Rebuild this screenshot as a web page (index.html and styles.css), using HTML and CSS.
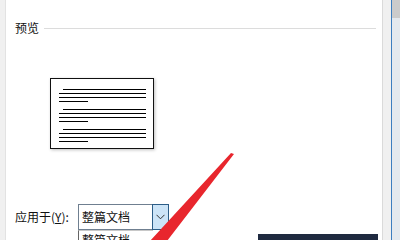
FILE: index.html
```html
<!DOCTYPE html>
<html>
  <head>
    <title>页面设置</title>
    <meta charset="utf-8" />
    <link rel="stylesheet" href="styles.css">
  </head>
  <body>
    <div class="window">
      <div class="edge-left"></div>
      <div class="main">
        <div class="group">
          <span class="group-title">预览</span>
          <span class="group-line"></span>
        </div>
        <!-- 预览缩略图：三段文字 -->
        <div class="preview">
          <div class="para">
            <i class="ln first"></i><i class="ln"></i><i class="ln"></i><i class="ln short"></i>
          </div>
          <div class="para">
            <i class="ln first"></i><i class="ln"></i><i class="ln"></i><i class="ln short"></i>
          </div>
          <div class="para">
            <i class="ln first"></i><i class="ln"></i><i class="ln"></i><i class="ln short"></i>
          </div>
        </div>
        <div class="apply">
          <span class="apply-label">应用于(<u>Y</u>):</span>
          <div class="combo">
            <span class="combo-text">整篇文档</span>
            <span class="combo-btn">
              <svg width="9" height="6" viewBox="0 0 9 6"><path d="M0.5 0.8 L4.5 4.8 L8.5 0.8" fill="none" stroke="#333" stroke-width="1"/></svg>
            </span>
            <div class="combo-list">
              <div class="combo-item">整篇文档</div>
            </div>
          </div>
        </div>
        <div class="ok-btn"></div>
      </div>
      <div class="edge-right">
        <div class="gutter"></div>
        <div class="rail"><div class="thumb"></div></div>
      </div>
    </div>
    <svg class="mark" width="400" height="240" viewBox="0 0 400 240">
      <polygon points="234,154 167,241 169,252 140,262 150,241 231,153" fill="#e8262d"/>
    </svg>
  </body>
</html>
```

FILE: styles.css
```css
html, body {
  margin: 0;
  padding: 0;
}
body {
  width: 400px;
  height: 240px;
  overflow: hidden;
  position: relative;
  font-family: "Noto Sans CJK SC", "Microsoft YaHei", sans-serif;
  font-size: 12px;
  color: #111;
  background: #fff;
}
.window {
  display: flex;
  height: 240px;
}
.edge-left {
  width: 5px;
  background: #f0f0f0;
  border-right: 1px solid #e2e2e2;
}
.main {
  flex: 1;
  display: flex;
  flex-direction: column;
  padding: 20px 6px 0 9px;
  background: #fff;
  overflow: hidden;
}
.group {
  display: flex;
  align-items: center;
  height: 16px;
}
.group-title {
  line-height: 16px;
  margin-right: 5px;
}
.group-line {
  flex: 1;
  height: 1px;
  background: #dcdcdc;
}
.preview {
  width: 94px;
  height: 62px;
  margin: 42px 0 0 35px;
  border: 1px solid #111;
  box-shadow: 1px 1px 3px rgba(0,0,0,.25);
  padding: 10px 0 0 8px;
  display: flex;
  flex-direction: column;
  gap: 7px;
}
.para {
  display: flex;
  flex-direction: column;
  gap: 3px;
}
.ln {
  display: block;
  width: 87px;
  height: 1px;
  background: #000;
}
.ln.first {
  width: 83px;
  margin-left: 4px;
}
.ln.short {
  width: 29px;
}
.apply {
  display: flex;
  align-items: center;
  margin-top: 55px;
}
.apply-label {
  width: 63px;
  line-height: 16px;
}
.combo {
  position: relative;
  display: flex;
  width: 89px;
  height: 24px;
  border: 1px solid #6f7f90;
}
.combo-text {
  flex: 1;
  line-height: 24px;
  padding-left: 3px;
}
.combo-btn {
  width: 15px;
  margin: -1px -1px -1px 0;
  border: 1px solid #2c5d87;
  background: #cce4f7;
  display: flex;
  align-items: center;
  justify-content: center;
}
.combo-list {
  position: absolute;
  left: -1px;
  top: 25px;
  width: 74px;
  border-left: 1px solid #646464;
  border-top: 1px solid #c8c8c8;
  background: #fff;
}
.combo-item {
  line-height: 16px;
  padding: 1px 0 0 3px;
}
.ok-btn {
  margin: 4px 0 0 243px;
  width: 120px;
  height: 6px;
  background: #1f2a40;
}
.edge-right {
  display: flex;
  width: 17px;
  border-left: 1px solid #dadada;
}
.gutter {
  width: 8px;
  background: #f0f0f0;
  border-right: 1px solid #3d7ebf;
}
.rail {
  flex: 1;
  background: #e4e9ee;
}
.thumb {
  height: 18px;
  background: #cbcbcb;
}
.mark {
  position: absolute;
  left: 0;
  top: 0;
  pointer-events: none;
}
```
